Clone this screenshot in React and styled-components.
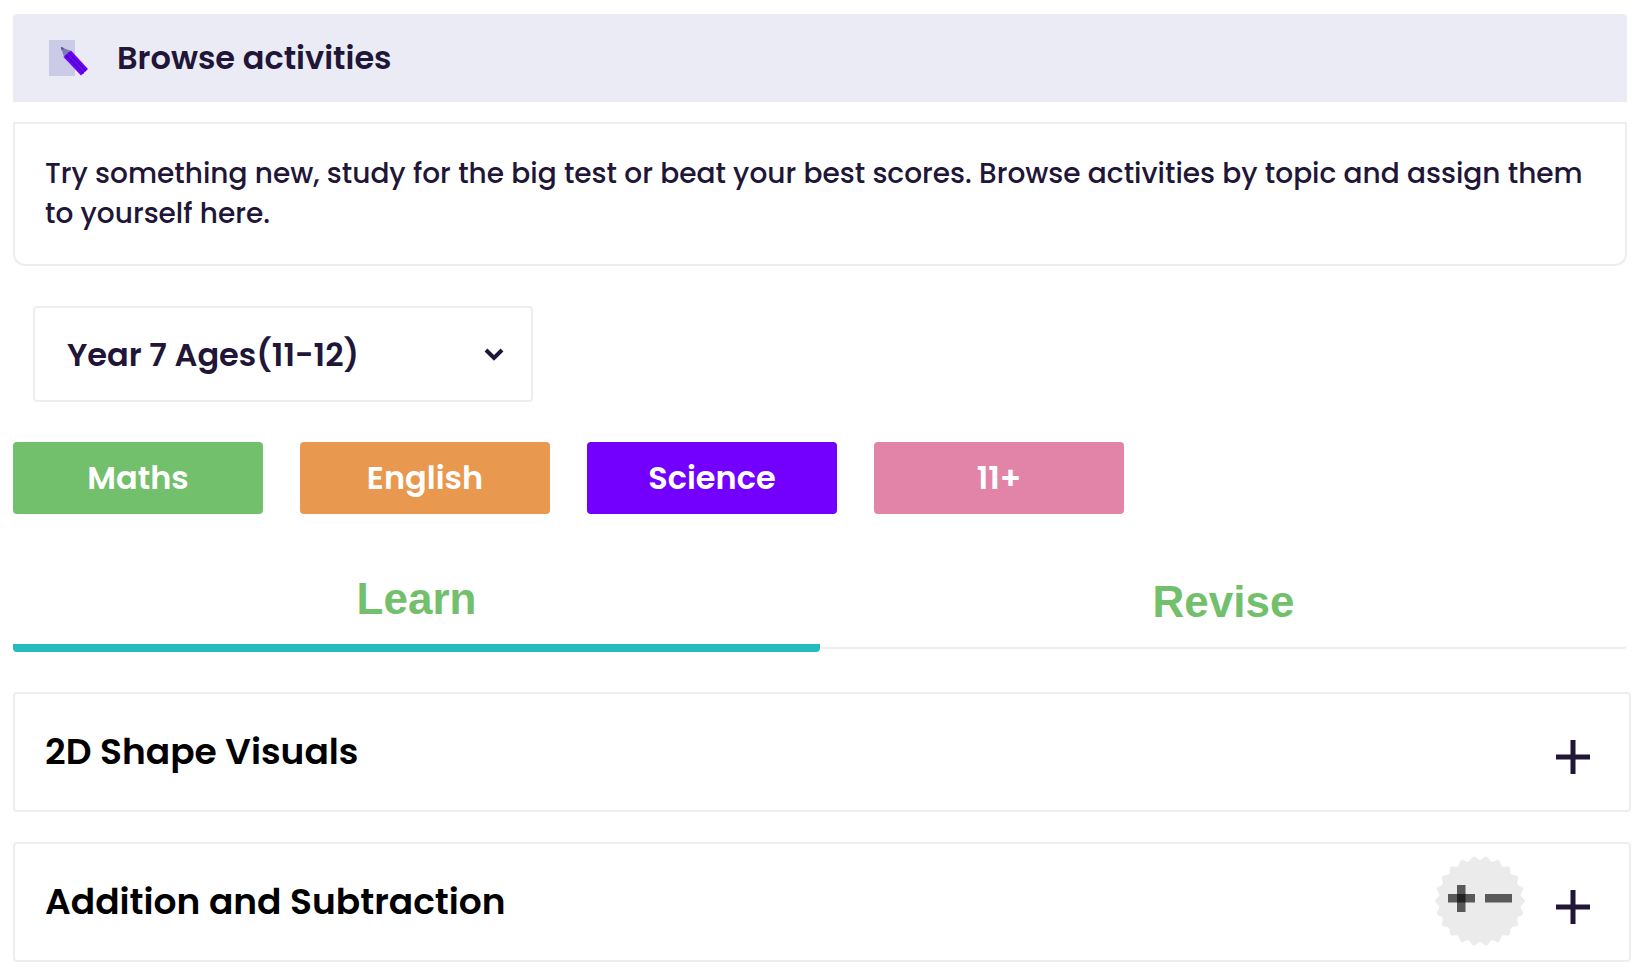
import { useState } from "react";
import styled, { createGlobalStyle } from "styled-components";

const GlobalStyle = createGlobalStyle`
    * {
        box-sizing: border-box;
    }
    body {
        margin: 0;
        background: #fff;
        color: #211637;
        font-family: Poppins, Inter, sans-serif;
    }
    button, select {
        font-family: inherit;
        color: inherit;
        cursor: pointer;
    }
`

const Page = styled.main`
    padding: 14px 16px 14px 13px;
`

const Browse = styled.div`
    margin-right: 4px;
`

const Header = styled.header`
    display: flex;
    align-items: center;
    gap: 28px;
    height: 88px;
    padding: 0 36px;
    border-radius: 4px 4px 0 0;
    background: #ebebf5;
`

const Title = styled.h1`
    margin: 0;
    font-size: 32px;
    line-height: 40px;
    font-weight: 600;
`

const Intro = styled.p`
    margin: 20px 0 40px;
    padding: 30px;
    border: 2px solid #eee;
    border-radius: 0 0 12px 12px;
    font-size: 28px;
    line-height: 40px;
    font-weight: 500;
`

const YearField = styled.div`
    position: relative;
    width: 500px;
    max-width: 100%;
    margin: 0 20px 40px;

    svg {
        position: absolute;
        right: 28px;
        top: 40px;
        pointer-events: none;
    }
`

const YearSelect = styled.select`
    display: block;
    width: 100%;
    height: 96px;
    padding: 0 64px 0 32px;
    border: 2px solid #eee;
    border-radius: 4px;
    background: #fff;
    font-size: 32px;
    font-weight: 600;
    appearance: none;
`

const Subjects = styled.div`
    display: flex;
    flex-wrap: wrap;
    gap: 37px;
    margin-bottom: 40px;
`

const SubjectButton = styled.button`
    width: 250px;
    height: 72px;
    padding: 0;
    border: 0;
    border-radius: 4px;
    background: ${({ $color }) => $color};
    && {
        color: #fff;
    }
    font-size: 32px;
    font-weight: 600;
`

const Tabs = styled.div`
    display: grid;
    grid-template-columns: 1fr 1fr;
    align-items: center;
    margin-bottom: 40px;
`

const Tab = styled.button`
    padding: 20px 0;
    border: 0;
    border-bottom: ${({ $active }) => ($active ? "8px solid #24bcbc" : "2px solid #eee")};
    border-radius: 0 0 4px 4px;
    background: none;
    && {
        color: #72bf6c;
        font-family: "Liberation Sans", Arial, sans-serif;
    }
    font-size: 44px;
    line-height: 50px;
    font-weight: 700;
`

const TopicList = styled.div`
    display: grid;
    gap: 30px;
`

const Topic = styled.button`
    display: flex;
    align-items: center;
    gap: 31px;
    height: 120px;
    padding: 0 39px 0 30px;
    border: 2px solid #eee;
    border-radius: 4px;
    background: #fff;
    text-align: left;

    && {
        color: #000;
    }
`

const TopicName = styled.span`
    flex: 1;
    font-size: 36px;
    line-height: 40px;
    font-weight: 600;
`

const BadgeSlot = styled.span`
    display: flex;
    padding-bottom: 2px;
`

const PlusSlot = styled.span`
    display: flex;
    padding-top: 10px;
`

const subjects = [
    { name: "Maths", color: "#72bf6c" },
    { name: "English", color: "#e99850" },
    { name: "Science", color: "#7300ff" },
    { name: "11+", color: "#e184a7" },
]

const topics = [
    { name: "2D Shape Visuals" },
    { name: "Addition and Subtraction", badge: true },
]

function PencilIcon(){
    return (
        <svg width="40" height="36" viewBox="0 0 40 36" aria-hidden="true">
            <rect width="26" height="36" fill="#cbcbe7"/>
            <path d="M12 7 22 11 15 17Z" fill="#7b7bb5"/>
            <path d="M12 7 15 8 12.500 10.500Z" fill="#4b4b9b"/>
            <path d="M22 10.500 39 29 32 35.500 14.500 17Z" fill="#7300ff"/>
            <path d="M19.500 12.500 37 31M17 15 34.500 33.500" stroke="#4000b4" strokeWidth="1.200"/>
        </svg>
    )
}

function ChevronIcon(){
    return (
        <svg width="22" height="16" viewBox="0 0 22 16" fill="none" aria-hidden="true">
            <path d="M3 4 11 12 19 4" stroke="#211637" strokeWidth="4"/>
        </svg>
    )
}

function PlusIcon(){
    return (
        <svg width="34" height="34" viewBox="0 0 34 34" aria-hidden="true">
            <path d="M17 0V34M0 17H34" stroke="#211637" strokeWidth="5"/>
        </svg>
    )
}

// 22 teeth round the edge, with a notch at the top
const teeth = 22
const badgePath = Array.from({ length: teeth }, (_, i) => {
    const point = (step, r) => {
        const a = (step * 2 * Math.PI) / teeth
        return `${(45 + r * Math.cos(a)).toFixed(2)} ${(45 + r * Math.sin(a)).toFixed(2)}`
    }
    return `${i === 0 ? "M" : "L"}${point(i - 0.1, 44.6)}Q${point(i, 45.2)} ${point(i + 0.1, 44.6)}L${point(i + 0.4, 41.4)}Q${point(i + 0.5, 40.8)} ${point(i + 0.6, 41.4)}`
}).join("") + "Z"

function SumsBadge(){
    return (
        <svg width="90" height="90" viewBox="0 0 90 90" aria-hidden="true">
            <path d={badgePath} fill="#ebebeb"/>
            <g fill="#000" fillOpacity="0.620">
                <rect x="13" y="38" width="27" height="8.500"/>
                <rect x="22" y="29" width="8.500" height="27"/>
                <rect x="50" y="38" width="27" height="8.500"/>
            </g>
        </svg>
    )
}

function App(){
    const [tab, setTab] = useState("Learn")

    return (
        <Page>
            <GlobalStyle/>
            <Browse>
                <Header>
                    <PencilIcon/>
                    <Title>Browse activities</Title>
                </Header>
                <Intro>
                    Try something new, study for the big test or beat your best scores. Browse activities by topic and assign them to yourself here.
                </Intro>
                <YearField>
                    <YearSelect aria-label="Year" defaultValue="7">
                        <option value="7">Year 7 Ages(11-12)</option>
                    </YearSelect>
                    <ChevronIcon/>
                </YearField>
                <Subjects>
                    {subjects.map((subject)=>(
                        <SubjectButton key={subject.name} $color={subject.color}>{subject.name}</SubjectButton>
                    ))}
                </Subjects>
                <Tabs role="tablist">
                    {["Learn", "Revise"].map((name)=>(
                        <Tab key={name} role="tab" aria-selected={tab === name} $active={tab === name} onClick={()=>setTab(name)}>{name}</Tab>
                    ))}
                </Tabs>
            </Browse>
            <TopicList>
                {topics.map((topic)=>(
                    <Topic key={topic.name}>
                        <TopicName>{topic.name}</TopicName>
                        {topic.badge && <BadgeSlot><SumsBadge/></BadgeSlot>}
                        <PlusSlot><PlusIcon/></PlusSlot>
                    </Topic>
                ))}
            </TopicList>
        </Page>
    )
}

export default App;
